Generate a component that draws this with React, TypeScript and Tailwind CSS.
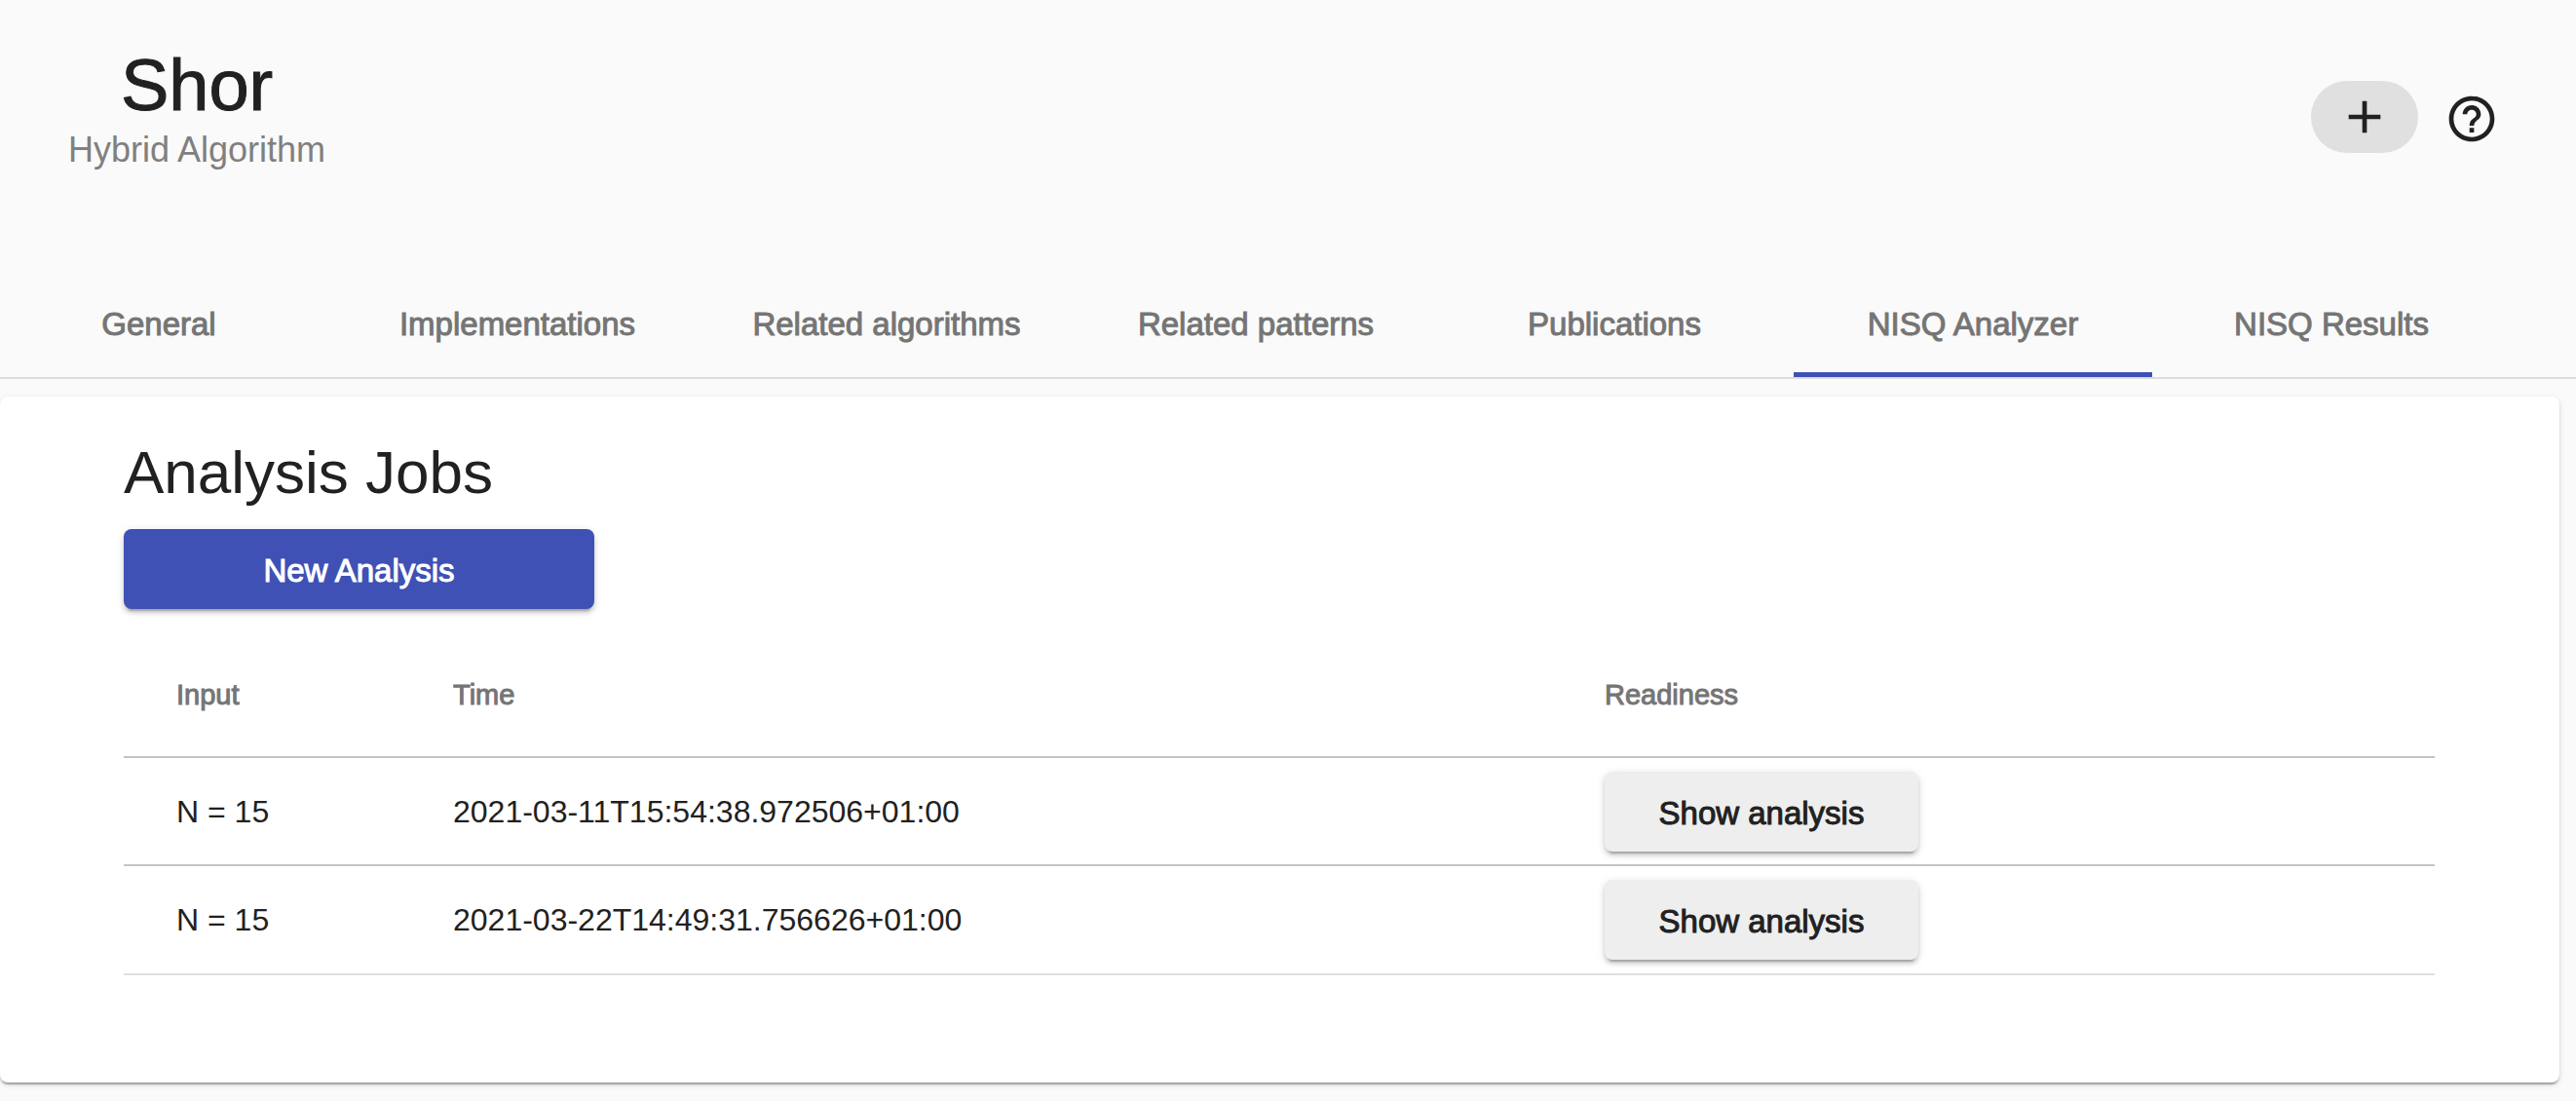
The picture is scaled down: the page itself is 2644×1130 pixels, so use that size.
import React from "react";
import { MdAdd, MdHelpOutline } from "react-icons/md";

const tabs = [
  "General",
  "Implementations",
  "Related algorithms",
  "Related patterns",
  "Publications",
  "NISQ Analyzer",
  "NISQ Results",
];

const jobs = [
  { input: "N = 15", time: "2021-03-11T15:54:38.972506+01:00" },
  { input: "N = 15", time: "2021-03-22T14:49:31.756626+01:00" },
];

const raised =
  "rounded-lg pt-1 text-[33px] leading-[40px] [-webkit-text-stroke:1px] shadow-[0_6px_2px_-4px_rgba(0,0,0,0.2),0_4px_4px_0_rgba(0,0,0,0.14),0_2px_10px_0_rgba(0,0,0,0.12)]";

function Header() {
  return (
    <header className="flex h-[279px] items-start justify-between pl-[70px] pr-[79px]">
      <div className="pt-[46px] text-center">
        <h1 className="text-[74px] leading-[84px] [-webkit-text-stroke:1px]">Shor</h1>
        <p className="text-[36px] leading-[48px] text-[#808080]">Hybrid Algorithm</p>
      </div>
      <div className="flex items-center gap-[27px] pt-[83px]">
        <button
          type="button"
          aria-label="Add"
          className="flex h-[74px] w-[110px] items-center justify-center rounded-full bg-[#e0e0e0]"
        >
          <MdAdd className="size-14" />
        </button>
        <button type="button" aria-label="Help" className="pt-1">
          <MdHelpOutline className="size-14" />
        </button>
      </div>
    </header>
  );
}

function TabBar() {
  return (
    <nav className="overflow-hidden border-b-2 border-[#dcdcdc]">
      <div
        role="tablist"
        className="-ml-[21px] mr-[67px] grid h-[108px] grid-cols-[repeat(2,368fr)_390fr_repeat(4,368fr)]"
      >
        {tabs.map((label) => {
          const active = label === "NISQ Analyzer";
          return (
            <button
              key={label}
              type="button"
              role="tab"
              aria-selected={active}
              className="relative whitespace-nowrap text-[33px] leading-[40px] text-[#757575] [-webkit-text-stroke:1px]"
            >
              {label}
              {active && <span className="absolute inset-x-0 bottom-0 h-[5px] bg-[#3f51b5]" />}
            </button>
          );
        })}
      </div>
    </nav>
  );
}

function JobsTable() {
  return (
    <table className="mt-[25px] w-full table-fixed border-separate border-spacing-0 text-left">
      <thead>
        <tr className="h-[128px] text-[29px] leading-[36px] text-[#757575] [-webkit-text-stroke:1px] [&>th]:border-b-2 [&>th]:border-[#c4c4c4] [&>th]:font-normal">
          <th className="w-[338px] pl-[54px]">Input</th>
          <th className="w-[1182px]">Time</th>
          <th>Readiness</th>
        </tr>
      </thead>
      <tbody>
        {jobs.map((job) => (
          <tr
            key={job.time}
            className="h-[111px] text-[32px] leading-[40px] last:h-[112px] [&>td]:border-b-2 [&>td]:border-[#c4c4c4] last:[&>td]:border-[#e0e0e0]"
          >
            <td className="pl-[54px]">{job.input}</td>
            <td>{job.time}</td>
            <td>
              <button type="button" className={"block h-[82px] w-[322px] bg-[#eeeeee] " + raised}>
                Show analysis
              </button>
            </td>
          </tr>
        ))}
      </tbody>
    </table>
  );
}

export default function App() {
  return (
    <div className="min-h-screen bg-[#fafafa] font-['Liberation_Sans',Arial,sans-serif] text-[#212121]">
      <Header />
      <TabBar />
      <main className="mr-[17px] mt-[18px] rounded-lg bg-white pb-[110px] pl-[127px] pr-[128px] pt-[38px] shadow-[0_4px_2px_-2px_rgba(0,0,0,0.2),0_2px_2px_0_rgba(0,0,0,0.14),0_2px_6px_0_rgba(0,0,0,0.12)]">
        <h2 className="text-[62px] leading-[80px]">Analysis Jobs</h2>
        <button type="button" className={"mt-[18px] block h-[82px] w-[483px] bg-[#3f51b5] text-white " + raised}>
          New Analysis
        </button>
        <JobsTable />
      </main>
    </div>
  );
}
